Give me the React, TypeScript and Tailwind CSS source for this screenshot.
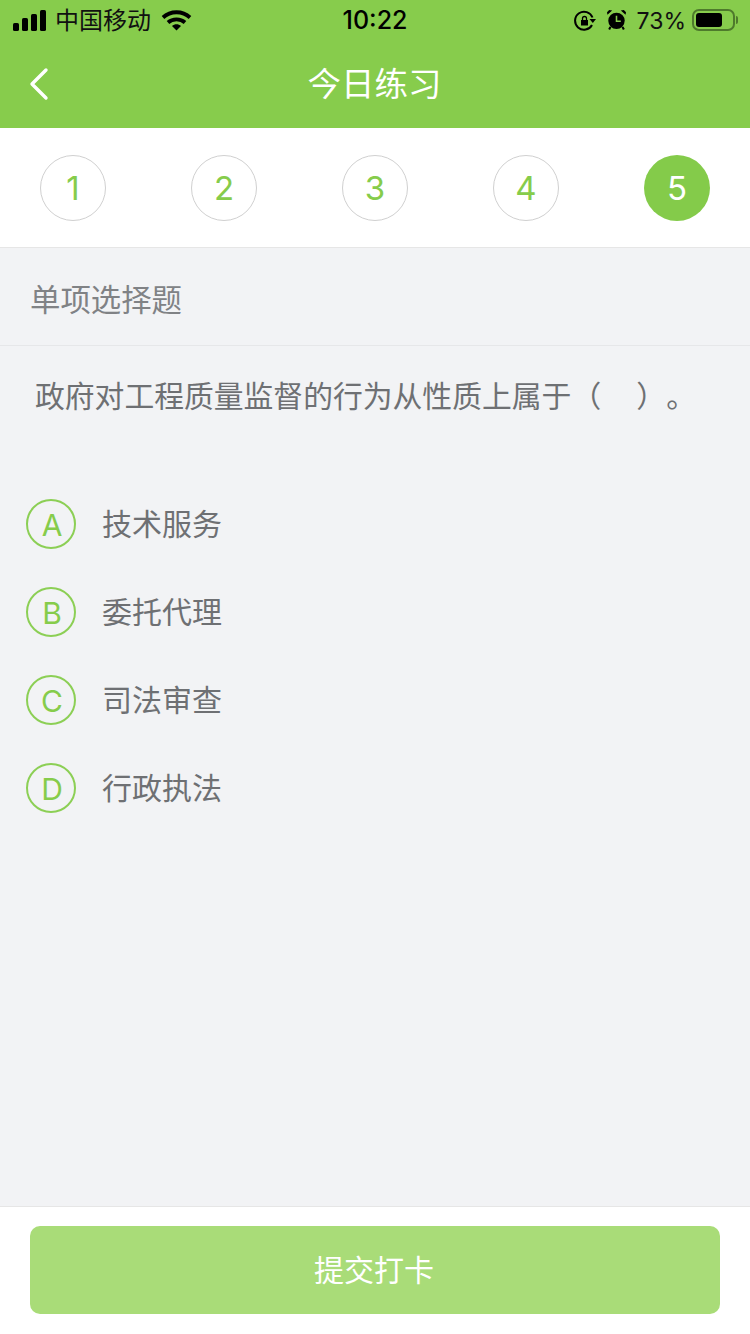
const F = "font-['Inter','Noto_Sans_CJK_SC',sans-serif]";

function Circle({ n, active }: { n: number; active?: boolean }) {
  return (
    <div className={active
      ? "w-[66px] h-[66px] rounded-full bg-[#84cb4a] flex items-center justify-center text-white text-[33px] pt-[2px]"
      : "w-[66px] h-[66px] rounded-full bg-white border border-[#d0d0d0] flex items-center justify-center text-[#86cc4b] text-[33px] pt-[2px]"}>
      {n}
    </div>
  );
}

function Option({ l, t }: { l: string; t: string }) {
  return (
    <div className="h-[88px] flex items-center pl-[26px]">
      <div className="w-[50px] h-[50px] rounded-full border-2 border-[#8ccf55] flex items-center justify-center text-[#86cc4b] text-[30px] leading-none pl-[2px] pt-[2px]">{l}</div>
      <div className="ml-[26px] text-[30px] leading-none text-[#6e7073]">{t}</div>
    </div>
  );
}

export default function App() {
  return (
    <div className={`${F} w-[750px] h-[1334px] bg-[#f2f3f5] flex flex-col overflow-hidden`}>
      <div className="h-[128px] bg-[#87cc4c] flex flex-col shrink-0">
        <div className="h-[42px] flex items-center justify-between relative pl-[13px] pr-[12px]">
          <div className="flex items-center">
            <svg className="mb-[2px]" width="33" height="21" viewBox="0 0 33 21" fill="#000">
              <rect x="0" y="13" width="6" height="8" rx="1.6" />
              <rect x="9" y="8" width="6" height="13" rx="1.6" />
              <rect x="18" y="4" width="6" height="17" rx="1.6" />
              <rect x="27" y="0" width="6" height="21" rx="1.6" />
            </svg>
            <span className="ml-[9px] text-[24px] leading-none text-[#111]">中国移动</span>
            <svg className="ml-[10px]" width="31" height="22" viewBox="0 0 30 22" fill="none" stroke="#000" strokeWidth="3.8">
              <path d="M1.5 7.5 C9 0.5 21 0.5 28.5 7.5" />
              <path d="M6.5 12.5 C11 8.3 19 8.3 23.5 12.5" />
              <path d="M10.5 16 L15 20.5 L19.5 16 C17 13.6 13 13.6 10.5 16 Z" fill="#000" stroke="none" />
            </svg>
          </div>
          <span className="absolute left-0 right-0 text-center text-[25px] font-medium text-black pointer-events-none">10:22</span>
          <div className="flex items-center">
            <svg width="22" height="22" viewBox="0 0 22 22" fill="none" stroke="#000" strokeWidth="2">
              <path d="M18 15 A9 9 0 1 1 18.5 7.5" />
              <path d="M15.5 9 L22 9 L18.8 13 Z" fill="#000" stroke="none" />
              <rect x="7" y="10" width="7" height="5.5" fill="#000" stroke="none" />
              <path d="M8.5 10 V8.5 a2 2 0 0 1 4 0 V10" strokeWidth="1.3" />
            </svg>
            <svg className="ml-[11px] mb-[2px]" width="19" height="22" viewBox="0 0 22 24" fill="#000">
              <circle cx="11" cy="13" r="9.5" />
              <path d="M0.5 6 L6 1 L2.5 0.5 L0 3 Z M21.5 6 L16 1 L19.5 0.5 L22 3 Z" />
              <path d="M11 7 V13.5 H16" stroke="#87cc4c" strokeWidth="1.8" fill="none" />
              <path d="M4 20 L2.5 23 M18 20 L19.5 23" stroke="#000" strokeWidth="2.4" />
            </svg>
            <span className="ml-[11px] text-[23px] leading-none text-[#111]">73%</span>
            <div className="ml-[6px] mb-[3px] w-[43px] h-[22px] rounded-[7px] border-2 border-[#4e7a2c] p-[2px]">
              <div className="w-[26px] h-full rounded-[3px] bg-black" />
            </div>
            <div className="ml-[1px] mb-[3px] w-[2px] h-[8px] rounded-r bg-[#4e7a2c]" />
          </div>
        </div>
        <div className="flex-1 relative flex items-center justify-center">
          <svg className="absolute left-[28px] top-[25px]" width="22" height="34" viewBox="0 0 22 34" fill="none" stroke="#fff" strokeWidth="3.4" strokeLinecap="round" strokeLinejoin="round">
            <path d="M18 3 L4 17 L18 31" />
          </svg>
          <span className="text-white text-[33.5px] leading-none pr-[1px]">今日练习</span>
        </div>
      </div>

      <div className="h-[120px] bg-white border-b border-[#e6e6e6] flex items-center justify-between px-[40px] shrink-0">
        {[1, 2, 3, 4].map((n) => <Circle key={n} n={n} />)}
        <Circle n={5} active />
      </div>

      <div className="h-[98px] border-b border-[#e6e7e9] flex items-center pl-[30px] pt-[8px] shrink-0 text-[#808285] text-[30.4px] leading-none">
        单项选择题
      </div>

      <div className="pl-[35px] pt-[35px] text-[30px] leading-none text-[#6e7073] whitespace-pre shrink-0 [text-spacing-trim:space-all]">
        <span className="text-[29.8px]">政府对工程质量监督的行为从性质上属于</span><span>（</span><span className="ml-[35px]">）</span><span>。</span>
      </div>

      <div className="mt-[68px] flex flex-col">
        <Option l="A" t="技术服务" />
        <Option l="B" t="委托代理" />
        <Option l="C" t="司法审查" />
        <Option l="D" t="行政执法" />
      </div>

      <div className="mt-auto h-[128px] bg-white border-t border-[#e6e6e6] px-[30px] pt-[19px] shrink-0">
        <div className="h-[88px] rounded-[10px] bg-[#a9dc78] flex items-center justify-center text-white text-[30px] pr-[2px]">提交打卡</div>
      </div>
    </div>
  );
}
